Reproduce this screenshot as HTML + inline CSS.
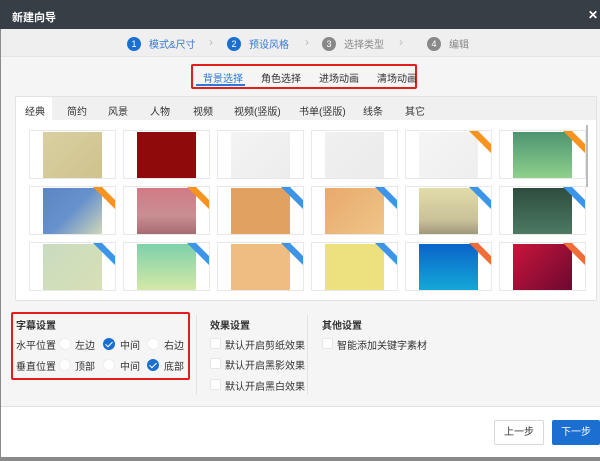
<!DOCTYPE html>
<html><head><meta charset="utf-8"><style>
*{margin:0;padding:0;box-sizing:border-box}
body{width:600px;height:461px;overflow:hidden;background:#8a8a8a;font-family:"Liberation Sans","Noto Sans CJK SC",sans-serif;font-size:10px;color:#333;position:relative}
.abs{position:absolute}
.hdr{left:0;top:0;width:600px;height:29px;background:#383e46;color:#fff;font-size:11px;font-weight:bold;padding:9px 0 0 12px}
.x{right:2px;top:8px;color:#fff;font-size:12px;font-weight:bold}
.dlg{left:1px;top:29px;width:599px;height:428px;background:#f5f5f5}
.steps{left:0;top:0;width:599px;height:28px;background:#efefef;border-bottom:1px solid #e4e4e4}
.st{top:7px;font-size:10px;color:#3a7bd5;display:flex;align-items:center}
.st b{display:inline-block;width:14px;height:14px;border-radius:50%;background:#1a6fd1;color:#fff;font-size:9px;text-align:center;line-height:14px;margin-right:8px;font-weight:normal}
.st.g{color:#888}.st.g b{background:#888}
.arr{top:6px;color:#bbb;font-size:12px}
.rb{left:191px;top:64px;width:226px;height:25px;border:2px solid #e51c1c;border-radius:2px}
.tab{top:70px;font-size:10px;color:#333}
.panel{left:15px;top:96px;width:582px;height:205px;background:#fff;border:1px solid #e2e2e2;border-radius:2px;overflow:hidden}
.tbar{left:0;top:0;width:582px;height:23px;background:#f0f0f0}
.tb{top:6px;font-size:10px;color:#333}
.card{width:87px;height:49px;border:1px solid #e8e8e8;background:#fff;overflow:hidden}
.card i{position:absolute;left:13px;top:1px;width:59px;height:46px}
.rib{position:absolute;right:0;top:0;width:22px;height:22px;background:#f7931e;clip-path:polygon(0 0,9px 0,22px 13px,22px 22px)}
.rib.b{background:#3d95e8}.rib.r{background:#f06d3a}
.sec{font-weight:bold;font-size:10px;color:#333}
.rad{width:12px;height:12px;border-radius:50%;background:#fff;border:1px solid #eee}
.rad.on{background:#1a6fd1;border-color:#1a6fd1}
.rad.on:after{content:"";position:absolute;left:3px;top:1px;width:3px;height:6px;border:solid #fff;border-width:0 1.5px 1.5px 0;transform:rotate(45deg)}
.chk{width:11px;height:11px;background:#fff;border:1px solid #e6e6e6;border-radius:2px}
.lbl{font-size:10px;color:#333}
</style></head><body>
<div class="abs hdr">新建向导</div><div class="abs x">✕</div>
<div class="abs dlg">
 <div class="abs steps">
  <div class="abs st" style="left:126px"><b>1</b>模式&amp;尺寸</div>
  <div class="abs arr" style="left:208px">›</div>
  <div class="abs st" style="left:226px"><b>2</b>预设风格</div>
  <div class="abs arr" style="left:304px">›</div>
  <div class="abs st g" style="left:321px"><b>3</b>选择类型</div>
  <div class="abs arr" style="left:398px">›</div>
  <div class="abs st g" style="left:426px"><b>4</b>编辑</div>
 </div>
</div>
<div class="abs rb"></div>
<div class="abs tab" style="left:203px;color:#2b78d8">背景选择</div>
<div class="abs" style="left:196px;top:84px;width:49px;height:2px;background:#2b78d8"></div>
<div class="abs tab" style="left:261px">角色选择</div>
<div class="abs tab" style="left:319px">进场动画</div>
<div class="abs tab" style="left:377px">清场动画</div>
<div class="abs panel">
 <div class="abs tbar"></div>
 <div class="abs" style="left:0;top:0;width:36px;height:23px;background:#fff"></div>
 <div class="abs tb" style="left:9px">经典</div>
 <div class="abs tb" style="left:51px">简约</div>
 <div class="abs tb" style="left:92px">风景</div>
 <div class="abs tb" style="left:134px">人物</div>
 <div class="abs tb" style="left:177px">视频</div>
 <div class="abs tb" style="left:218px">视频(竖版)</div>
 <div class="abs tb" style="left:283px">书单(竖版)</div>
 <div class="abs tb" style="left:347px">线条</div>
 <div class="abs tb" style="left:389px">其它</div>
 <div class="abs" style="left:570px;top:28px;width:2px;height:62px;background:#bbb"></div>
</div>
<div class="abs" style="left:14px;top:96px;width:584px;height:205px">
<div class="abs card" style="left:15px;top:34px"><i style="background:linear-gradient(135deg,#d9cfa0,#cfc28e)"></i></div>
<div class="abs card" style="left:109px;top:34px"><i style="background:#8f0a0a"></i></div>
<div class="abs card" style="left:203px;top:34px"><i style="background:linear-gradient(135deg,#f4f4f4,#ececec)"></i></div>
<div class="abs card" style="left:297px;top:34px"><i style="background:linear-gradient(135deg,#f0f0f0,#ebebeb)"></i></div>
<div class="abs card" style="left:391px;top:34px"><i style="background:linear-gradient(135deg,#f5f5f5,#eee)"></i><span class="rib"></span></div>
<div class="abs card" style="left:485px;top:34px"><i style="background:linear-gradient(180deg,#4c9470,#8fd08c)"></i><span class="rib"></span></div>
<div class="abs card" style="left:15px;top:90px"><i style="background:linear-gradient(135deg,#5b86c4,#6791cc 50%,#cfd7b8)"></i><span class="rib"></span></div>
<div class="abs card" style="left:109px;top:90px"><i style="background:linear-gradient(180deg,#d27a86,#c98f93 60%,#a56b72)"></i><span class="rib"></span></div>
<div class="abs card" style="left:203px;top:90px"><i style="background:#e0a161"></i><span class="rib b"></span></div>
<div class="abs card" style="left:297px;top:90px"><i style="background:linear-gradient(135deg,#e9a96c,#efc588)"></i><span class="rib b"></span></div>
<div class="abs card" style="left:391px;top:90px"><i style="background:linear-gradient(180deg,#e2dcaa,#c9c198 70%,#9f987b)"></i><span class="rib b"></span></div>
<div class="abs card" style="left:485px;top:90px"><i style="background:linear-gradient(180deg,#2f4c3e,#4b7a63)"></i><span class="rib b"></span></div>
<div class="abs card" style="left:15px;top:146px"><i style="background:linear-gradient(135deg,#c9dcc0,#d7dfb5)"></i><span class="rib b"></span></div>
<div class="abs card" style="left:109px;top:146px"><i style="background:linear-gradient(180deg,#7ed0a9,#d4e9a8)"></i><span class="rib b"></span></div>
<div class="abs card" style="left:203px;top:146px"><i style="background:#efbd82"></i><span class="rib b"></span></div>
<div class="abs card" style="left:297px;top:146px"><i style="background:#ece17e"></i><span class="rib b"></span></div>
<div class="abs card" style="left:391px;top:146px"><i style="background:linear-gradient(180deg,#0a63c9,#14a8d8)"></i><span class="rib r"></span></div>
<div class="abs card" style="left:485px;top:146px"><i style="background:linear-gradient(135deg,#c9153b,#6d0830)"></i><span class="rib r"></span></div>
</div>
<div class="abs" style="left:11px;top:312px;width:179px;height:68px;border:2px solid #e51c1c;border-radius:2px"></div>
<div class="abs sec" style="left:16px;top:317px">字幕设置</div>
<div class="abs lbl" style="left:16px;top:337px">水平位置</div>
<div class="abs rad" style="left:59px;top:338px"></div><div class="abs lbl" style="left:75px;top:337px">左边</div>
<div class="abs rad on" style="left:103px;top:338px"></div><div class="abs lbl" style="left:120px;top:337px">中间</div>
<div class="abs rad" style="left:147px;top:338px"></div><div class="abs lbl" style="left:164px;top:337px">右边</div>
<div class="abs lbl" style="left:16px;top:358px">垂直位置</div>
<div class="abs rad" style="left:59px;top:359px"></div><div class="abs lbl" style="left:75px;top:358px">顶部</div>
<div class="abs rad" style="left:103px;top:359px"></div><div class="abs lbl" style="left:120px;top:358px">中间</div>
<div class="abs rad on" style="left:147px;top:359px"></div><div class="abs lbl" style="left:164px;top:358px">底部</div>
<div class="abs" style="left:196px;top:315px;width:1px;height:80px;background:#e2e2e2"></div>
<div class="abs" style="left:307px;top:315px;width:1px;height:80px;background:#e2e2e2"></div>
<div class="abs sec" style="left:210px;top:317px">效果设置</div>
<div class="abs chk" style="left:210px;top:338px"></div><div class="abs lbl" style="left:225px;top:337px">默认开启剪纸效果</div>
<div class="abs chk" style="left:210px;top:358px"></div><div class="abs lbl" style="left:225px;top:357px">默认开启黑影效果</div>
<div class="abs chk" style="left:210px;top:379px"></div><div class="abs lbl" style="left:225px;top:378px">默认开启黑白效果</div>
<div class="abs sec" style="left:322px;top:317px">其他设置</div>
<div class="abs chk" style="left:322px;top:338px"></div><div class="abs lbl" style="left:337px;top:337px">智能添加关键字素材</div>
<div class="abs" style="left:1px;top:406px;width:599px;height:51px;background:#fff;border-top:1px solid #e0e0e0"></div>
<div class="abs" style="left:494px;top:420px;width:50px;height:25px;border:1px solid #d8d8d8;border-radius:2px;background:#fff;text-align:center;line-height:23px;font-size:10px">上一步</div>
<div class="abs" style="left:552px;top:420px;width:48px;height:25px;background:#1a6fd1;border-radius:2px;color:#fff;text-align:center;line-height:25px;font-size:10px">下一步</div>
</body></html>
